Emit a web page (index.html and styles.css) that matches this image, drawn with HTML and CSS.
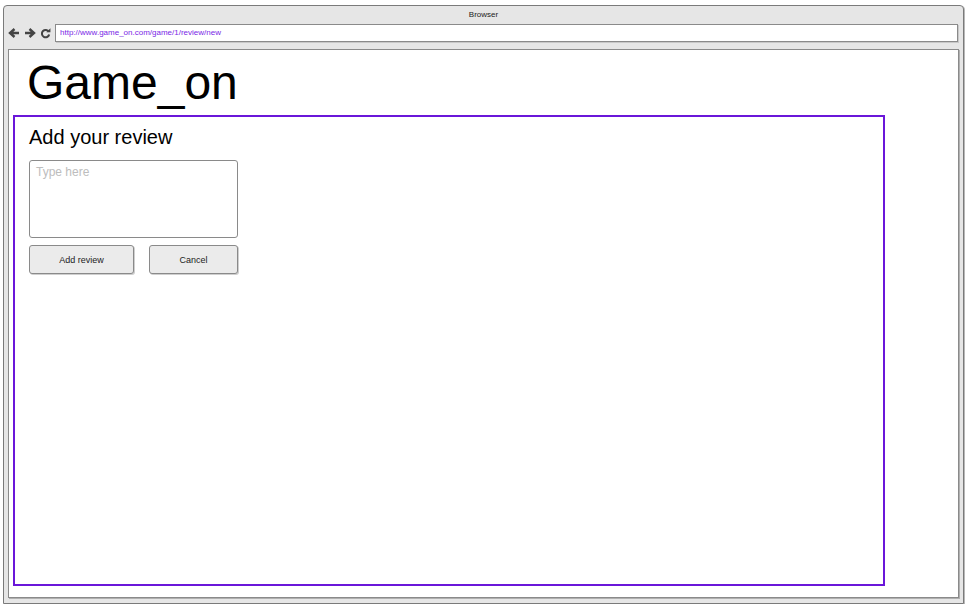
FILE: index.html
```html
<!DOCTYPE html>
<html>
<head>
<meta charset="utf-8">
<link rel="stylesheet" href="styles.css">
</head>
<body>
<div class="window">
  <div class="titlebar">Browser</div>
  <div class="toolbar">
    <div class="navs">
      <svg class="nav" width="12" height="12" viewBox="0 0 12 12"><path d="M11 6H3.5M6.5 2L2 6l4.5 4" fill="none" stroke="#444" stroke-width="2.4" stroke-linejoin="miter"/></svg>
      <svg class="nav" width="12" height="12" viewBox="0 0 12 12"><path d="M1 6h7.5M5.5 2L10 6l-4.5 4" fill="none" stroke="#444" stroke-width="2.4" stroke-linejoin="miter"/></svg>
      <svg class="nav" width="11" height="11" viewBox="0 0 12 12"><path d="M9.6 4.2A4 4 0 1 0 10 7" fill="none" stroke="#444" stroke-width="2.2"/><path d="M7 4.6h4.4V0.2z" fill="#444"/></svg>
    </div>
    <div class="address">http://www.game_on.com/game/1/review/new</div>
  </div>
  <div class="content">
    <h1 class="brand">Game_on</h1>
    <div class="panel">
      <h2 class="panel-title">Add your review</h2>
      <div class="textarea">Type here</div>
      <div class="buttons">
        <button class="btn btn-add">Add review</button>
        <button class="btn btn-cancel">Cancel</button>
      </div>
    </div>
  </div>
</div>
</body>
</html>
```
FILE: styles.css
```css
html, body {
  margin: 0;
  padding: 0;
  background: #ffffff;
}
body {
  padding: 5px 3px 0 3px;
  font-family: "Liberation Sans", Arial, sans-serif;
}
.window {
  box-sizing: border-box;
  width: 961px;
  height: 599px;
  border: 1px solid #7a7a7a;
  border-radius: 4px 4px 0 0;
  background: #e6e6e6;
  box-shadow: 1px 1px 0 #b8b8b8;
  display: flex;
  flex-direction: column;
}
.titlebar {
  height: 15px;
  padding-top: 1px;
  font-size: 8px;
  line-height: 16px;
  text-align: center;
  color: #222;
}
.toolbar {
  display: flex;
  align-items: center;
  height: 20px;
  padding: 0 5px 0 4px;
  margin-top: 1px;
}
.navs {
  display: flex;
  align-items: center;
  gap: 4px;
  width: 47px;
}
.nav { display: block; }
.address {
  box-sizing: border-box;
  flex: 1;
  height: 18px;
  margin-bottom: 1px;
  border: 1px solid #8a8a8a;
  box-shadow: inset 0 0 0 1px #ffffff, 1px 1px 0 #c8c8c8;
  background: #ffffff;
  color: #7a1fe6;
  font-size: 8px;
  line-height: 16px;
  padding-left: 4px;
}
.content {
  box-sizing: border-box;
  margin: 6px 4px 0 4px;
  height: 549px;
  background: #ffffff;
  border: 1px solid #8a8a8a;
  box-shadow: 1px 1px 0 #b0b0b0;
  padding: 0 0 0 4px;
}
.brand {
  margin: 0;
  font-weight: normal;
  font-size: 48px;
  line-height: 65px;
  padding-left: 14px;
  color: #000;
}
.panel {
  box-sizing: border-box;
  width: 872px;
  height: 471px;
  border: 2px solid #6a16d9;
  padding: 7px 0 0 14px;
}
.panel-title {
  margin: 0;
  font-weight: normal;
  font-size: 20px;
  line-height: 26px;
  color: #000;
}
.textarea {
  box-sizing: border-box;
  margin-top: 10px;
  width: 209px;
  height: 78px;
  border: 1px solid #8a8a8a;
  border-radius: 3px;
  background: #fff;
  color: #bdbdbd;
  font-size: 12px;
  line-height: 14px;
  padding: 4px 0 0 6px;
}
.buttons {
  display: flex;
  gap: 15px;
  margin-top: 7px;
}
.btn {
  box-sizing: border-box;
  height: 29px;
  border: 1px solid #8a8a8a;
  border-radius: 3px;
  background: #ebebeb;
  font-family: "Liberation Sans", Arial, sans-serif;
  font-size: 9px;
  line-height: 26px;
  color: #222;
  padding: 0;
  box-shadow: 1px 1px 0 #cfcfcf;
}
.btn-add { width: 105px; }
.btn-cancel { width: 89px; }
```
